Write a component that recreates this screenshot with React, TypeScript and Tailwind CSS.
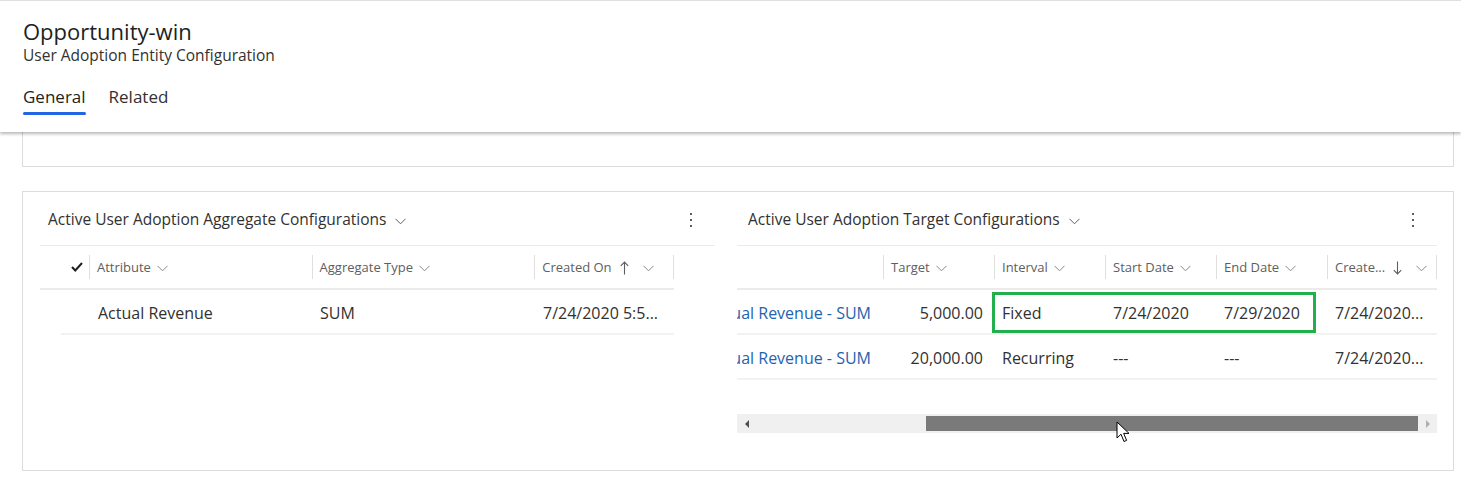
import React from "react";

const Chevron = ({className = ""}: {className?: string}) => (
    <svg width="11" height="7" viewBox="0 0 11 7" className={className} fill="none">
        <path d="M0.5 0.8 L5.5 5.8 L10.5 0.8" stroke="currentColor" strokeWidth="1"/>
    </svg>
);

const More = () => (
    <svg width="4" height="16" viewBox="0 0 4 16" fill="#605e5c">
        <rect x="1" y="1" width="2" height="2"/>
        <rect x="1" y="7" width="2" height="2"/>
        <rect x="1" y="13" width="2" height="2"/>
    </svg>
);

const Arrow = ({down}: {down?: boolean}) => (
    <svg width="9" height="14" viewBox="0 0 9 14" fill="none" className={down ? "rotate-180" : ""}>
        <path d="M4.5 13.5 V1 M0.8 4.8 L4.5 1 L8.2 4.8" stroke="#605e5c" strokeWidth="1.1"/>
    </svg>
);

const HeadCell = ({label, w, sort}: {label: string; w: string; sort?: "up" | "down"}) => (
    <div className={`flex h-full items-center ${w}`}>
        <span className="h-[24px] w-px bg-[#e1dfdd]"/>
        <div className="flex items-center gap-[6px] pl-[7px] pt-[2px] text-[13px] text-[#605e5c]">
            <span>{label}</span>
            {sort && <span className="ml-[2px] mr-[8px]"><Arrow down={sort === "down"}/></span>}
            <Chevron className="text-[#8a8886]"/>
        </div>
    </div>
);

const targetRows = [
    {target: "5,000.00", interval: "Fixed", start: "7/24/2020", end: "7/29/2020", created: "7/24/2020..."},
    {target: "20,000.00", interval: "Recurring", start: "---", end: "---", created: "7/24/2020..."},
];

const App = () => {
    return (
        <div className="relative h-[481px] w-[1461px] overflow-hidden bg-white font-['Segoe_UI','Open_Sans',sans-serif] text-[#323130]">
            <header className="relative z-10 h-[132px] border-t border-[#e1dfdd] bg-white px-[23px] pt-[16px] shadow-[0_2px_3px_rgba(0,0,0,0.28)]">
                <h1 className="text-[22px] leading-[28px] text-[#201f1e]">Opportunity-win</h1>
                <p className="text-[15.5px] leading-[20px] text-[#323130]">User Adoption Entity Configuration</p>
                <nav className="mt-[20px] flex gap-[23px] text-[17px] leading-[23px]">
                    <div className="flex flex-col">
                        <span className="font-medium text-[#201f1e]">General</span>
                        <span className="mt-[4px] h-[3px] rounded-sm bg-[#2266e3]"/>
                    </div>
                    <span className="text-[#323130]">Related</span>
                </nav>
            </header>

            <div className="ml-[22px] mr-[7px]">
                <div className="h-[35px] border-x border-b border-[#dcdcdc]"/>

                <div className="mt-[24px] flex h-[280px] border border-[#dcdcdc] pl-[17px]">
                    {/* Aggregate configurations */}
                    <section className="w-[675px]">
                        <div className="flex h-[54px] items-center justify-between border-b border-[#edebe9] pl-[8px] pr-[22px] pt-[3px]">
                            <div className="flex items-center gap-[9px]">
                                <h2 className="text-[15.5px] text-[#323130]">Active User Adoption Aggregate Configurations</h2>
                                <Chevron className="mt-[3px] text-[#605e5c]"/>
                            </div>
                            <More/>
                        </div>
                        <div className="w-[634px]">
                            <div className="flex h-[44px] items-center border-b-2 border-[#edebe9]">
                                <div className="flex w-[49px] justify-end pr-[6px]">
                                    <svg width="12" height="10" viewBox="0 0 12 10" fill="none">
                                        <path d="M1 5 L4.3 8.5 L11 1" stroke="#201f1e" strokeWidth="2"/>
                                    </svg>
                                </div>
                                <HeadCell label="Attribute" w="w-[223px]"/>
                                <HeadCell label="Aggregate Type" w="w-[223px]"/>
                                <HeadCell label="Created On" w="w-[139px]" sort="up"/>
                                <span className="h-[24px] w-px bg-[#e1dfdd]"/>
                            </div>
                            <div className="ml-[21px] flex h-[45px] items-center border-b-2 border-[#f3f2f1] pt-[3px] text-[16px]">
                                <span className="w-[28px]"/>
                                <span className="w-[223px] pl-[9px]">Actual Revenue</span>
                                <span className="w-[223px] pl-[8px]">SUM</span>
                                <span className="w-[139px] pl-[8px]">7/24/2020 5:5...</span>
                            </div>
                        </div>
                    </section>

                    {/* Target configurations */}
                    <section className="ml-[22px] w-[700px]">
                        <div className="flex h-[54px] items-center justify-between border-b border-[#edebe9] pl-[11px] pr-[22px] pt-[3px]">
                            <div className="flex items-center gap-[9px]">
                                <h2 className="text-[15.5px] text-[#323130]">Active User Adoption Target Configurations</h2>
                                <Chevron className="mt-[3px] text-[#605e5c]"/>
                            </div>
                            <More/>
                        </div>
                        <div className="flex h-[44px] items-center border-b-2 border-[#edebe9]">
                            <div className="w-[146px]"/>
                            <HeadCell label="Target" w="w-[111px]"/>
                            <HeadCell label="Interval" w="w-[111px]"/>
                            <HeadCell label="Start Date" w="w-[111px]"/>
                            <HeadCell label="End Date" w="w-[111px]"/>
                            <HeadCell label="Create..." w="w-[109px]" sort="down"/>
                            <span className="h-[24px] w-px bg-[#e1dfdd]"/>
                        </div>
                        {targetRows.map((r, i) => (
                            <div key={i} className="relative flex h-[45px] items-center border-b-2 border-[#f3f2f1] pt-[3px] text-[16px] whitespace-nowrap">
                                <div className="flex w-[146px] justify-end overflow-hidden pr-[12px] text-[#1f63b0]">
                                    <span>Actual Revenue - SUM</span>
                                </div>
                                <span className="w-[111px] pr-[11px] text-right">{r.target}</span>
                                <span className="w-[111px] pl-[8px]">{r.interval}</span>
                                <span className="w-[111px] pl-[8px]">{r.start}</span>
                                <span className="w-[111px] pl-[8px]">{r.end}</span>
                                <span className="w-[110px] pl-[8px]">{r.created}</span>
                                {i === 0 && (
                                    <div className="absolute left-[255px] top-[2px] h-[41px] w-[324px] border-[3px] border-[#21b04b]"/>
                                )}
                            </div>
                        ))}
                        <div className="mt-[34px] flex h-[19px] w-[700px] items-center bg-[#f0f0f0]">
                            <span className="ml-[8px] h-0 w-0 border-y-[4px] border-r-[4px] border-y-transparent border-r-[#505050]"/>
                            <div className="ml-[177px] h-[15px] w-[492px] bg-[#7a7a7a]"/>
                            <span className="ml-[8px] h-0 w-0 border-y-[4px] border-l-[4px] border-y-transparent border-l-[#b0b0b0]"/>
                        </div>
                    </section>
                </div>
            </div>

            {/* mouse pointer */}
            <svg className="absolute left-[1116px] top-[421px]" width="14" height="22" viewBox="0 0 14 22">
                <path d="M1 1 V17 L5 13.2 L8 20.5 L10.6 19.4 L7.7 12.4 L13 12.4 Z" fill="#fff" stroke="#000" strokeWidth="1" strokeLinejoin="round"/>
            </svg>
        </div>
    );
};

export default App;
